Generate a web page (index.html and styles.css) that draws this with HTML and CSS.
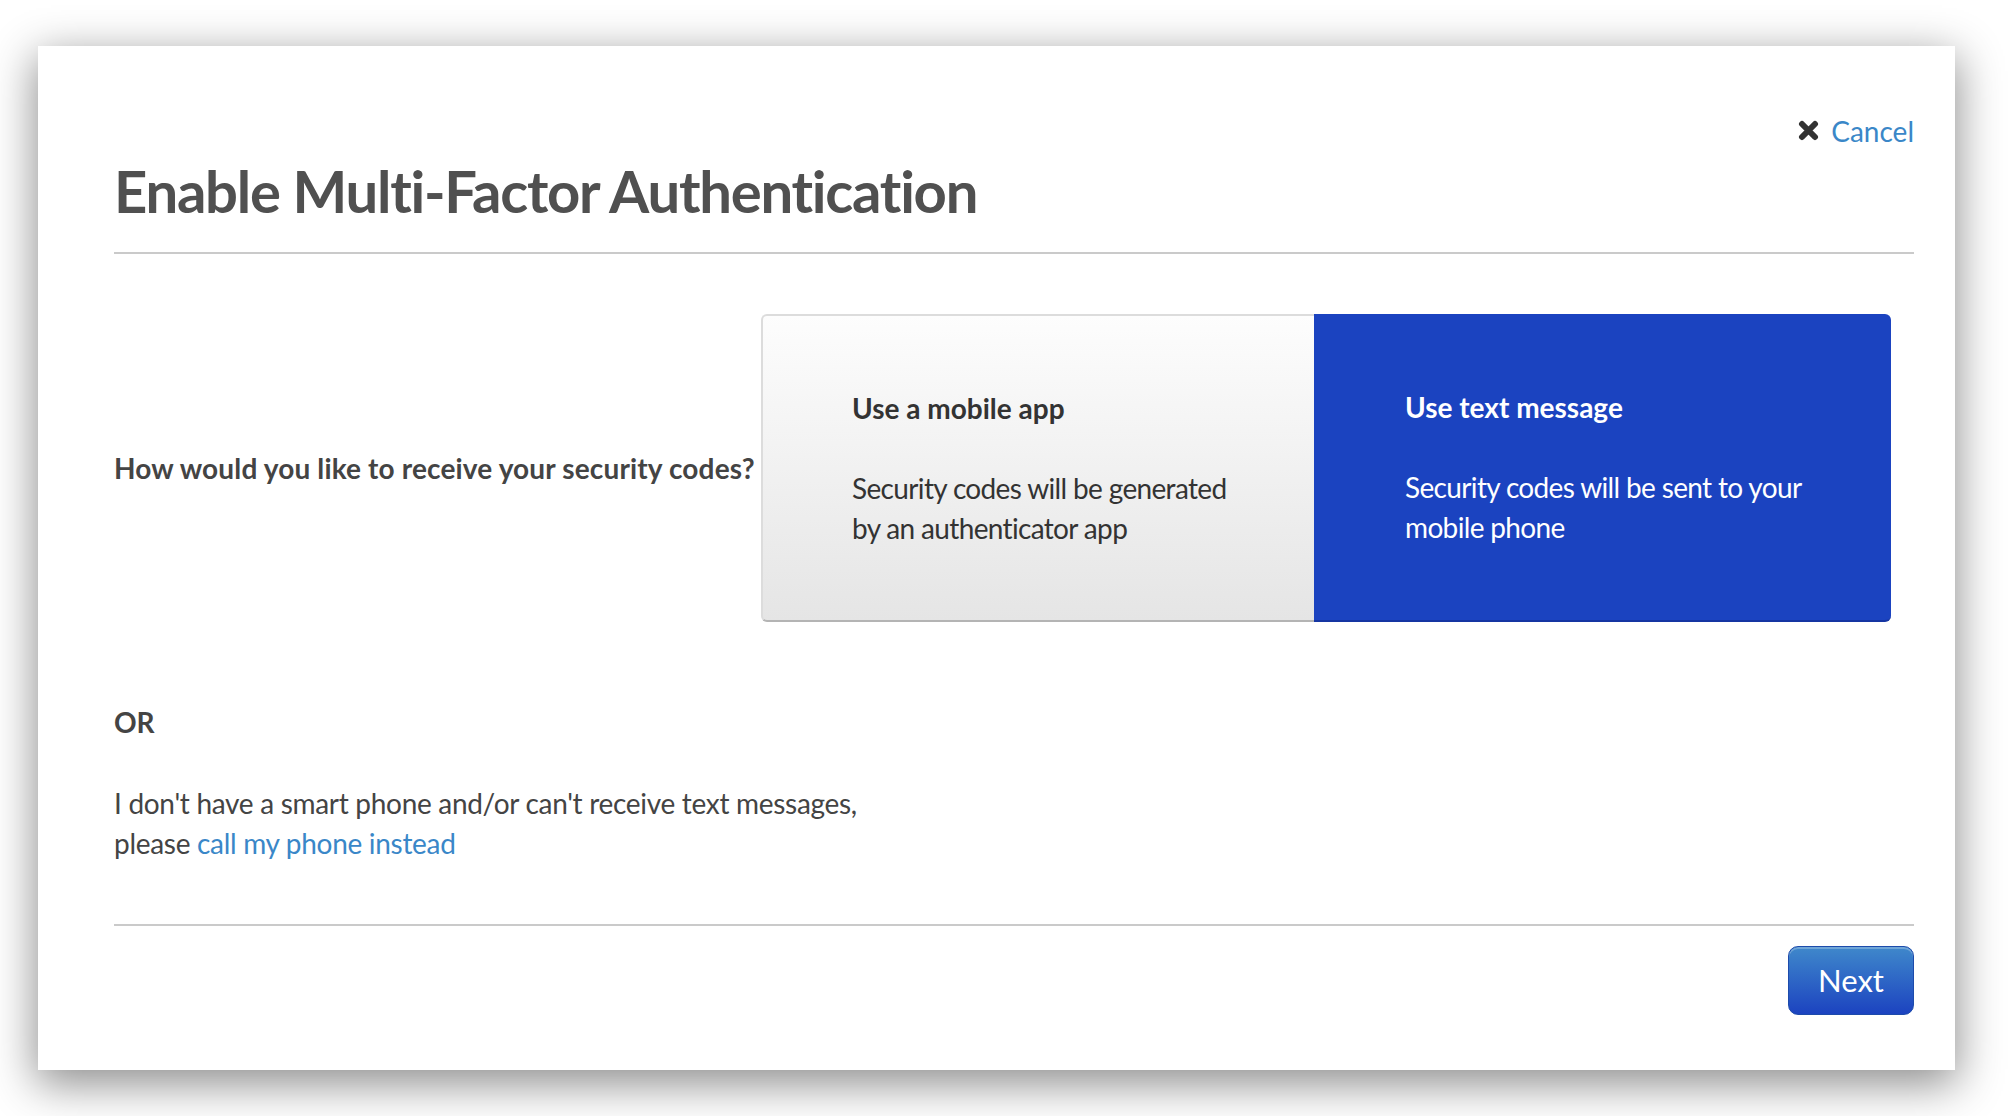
FILE: index.html
```html
<!DOCTYPE html>
<html lang="en">
<head>
<meta charset="utf-8">
<title>Enable Multi-Factor Authentication</title>
<link rel="stylesheet" href="styles.css">
</head>
<body>
<div class="page">
  <div class="card">
    <div class="cancel-row">
      <a class="cancel" href="#">
        <svg class="cancel-icon" viewBox="0 0 21 21" width="21" height="21" aria-hidden="true">
          <path d="M4 4 L17 17 M17 4 L4 17" stroke="#333" stroke-width="6" stroke-linecap="round"/>
        </svg>
        <span>Cancel</span>
      </a>
    </div>
    <h1 class="title">Enable Multi-Factor Authentication</h1>
    <hr class="rule">
    <div class="choose">
      <div class="question">How would you like to receive your security codes?</div>
      <div class="options">
        <div class="option option-app">
          <div class="option-title">Use a mobile app</div>
          <div class="option-body">Security codes will be generated<br>by an authenticator app</div>
        </div>
        <div class="option option-sms">
          <div class="option-title">Use text message</div>
          <div class="option-body">Security codes will be sent to your<br>mobile phone</div>
        </div>
      </div>
    </div>
    <div class="or">OR</div>
    <p class="alt">I don't have a smart phone and/or can't receive text messages,<br>please <a class="link" href="#">call my phone instead</a></p>
    <hr class="rule rule-bottom">
    <div class="actions">
      <button class="next" type="button">Next</button>
    </div>
  </div>
</div>
</body>
</html>
```
FILE: styles.css
```css
html, body {
  margin: 0;
  padding: 0;
  background: #ffffff;
}
body {
  width: 2010px;
  height: 1116px;
  overflow: hidden;
  font-family: Lato, "Open Sans", "Liberation Sans", sans-serif;
  color: #444;
}
.page {
  padding: 46px 55px 0 38px;
}
.card {
  box-sizing: border-box;
  width: 1917px;
  height: 1024px;
  background: #fff;
  padding: 0 41px 0 76px;
  box-shadow: 0 12px 42px 2px rgba(0, 0, 0, 0.45);
}
.cancel-row {
  display: flex;
  justify-content: flex-end;
  padding-top: 65px;
}
.cancel {
  display: flex;
  align-items: center;
  gap: 12px;
  font-size: 28px;
  line-height: 40px;
  color: #3a87c8;
  text-decoration: none;
}
.cancel-icon {
  display: block;
  margin-top: -2px;
}
.title {
  margin: 4px 0 0;
  font-size: 58px;
  line-height: 72px;
  font-weight: 700;
  letter-spacing: -1.25px;
  color: #505050;
}
.rule {
  border: 0;
  height: 2px;
  background: #cacaca;
  margin: 25px 0 0;
}
.choose {
  display: flex;
  align-items: center;
  margin-top: 60px;
}
.question {
  width: 647px;
  flex: 0 0 647px;
  white-space: nowrap;
  font-size: 28px;
  line-height: 40px;
  font-weight: 700;
  letter-spacing: 0.15px;
  color: #444;
}
.options {
  display: flex;
  width: 1130px;
  height: 308px;
}
.option {
  box-sizing: border-box;
  height: 308px;
  display: flex;
  flex-direction: column;
  justify-content: center;
  font-size: 28px;
  line-height: 40px;
}
.option-app {
  width: 553px;
  padding-left: 89px;
  background: linear-gradient(#fdfdfd, #e5e5e5);
  border: 2px solid #dcdcdc;
  border-right: 0;
  border-bottom-color: #b4b4b4;
  border-radius: 6px 0 0 6px;
  color: #333;
}
.option-sms {
  width: 577px;
  padding-left: 91px;
  background: #1b43c0;
  border-bottom: 2px solid #1535a2;
  border-radius: 0 6px 6px 0;
  color: #fff;
}
.option-title {
  font-weight: 700;
  margin-bottom: 40px;
}
.option-body {
  letter-spacing: -0.65px;
}
.or {
  margin-top: 80px;
  font-size: 28px;
  line-height: 40px;
  font-weight: 700;
  color: #444;
}
.alt {
  margin: 41px 0 0;
  font-size: 28px;
  line-height: 40px;
  letter-spacing: -0.3px;
  color: #444;
}
.link {
  color: #3a87c8;
  text-decoration: none;
}
.rule-bottom {
  margin-top: 61px;
}
.actions {
  display: flex;
  justify-content: flex-end;
  margin-top: 20px;
}
.next {
  box-sizing: border-box;
  width: 126px;
  height: 69px;
  border: 1px solid #1d4bab;
  border-radius: 10px;
  background: linear-gradient(#3f88cb, #1c43c0);
  box-shadow: inset 0 2px 0 rgba(255, 255, 255, 0.25);
  color: #fff;
  font-family: Lato, "Open Sans", sans-serif;
  font-size: 31px;
  line-height: 40px;
  padding: 0 0 2px;
  cursor: pointer;
}
```
